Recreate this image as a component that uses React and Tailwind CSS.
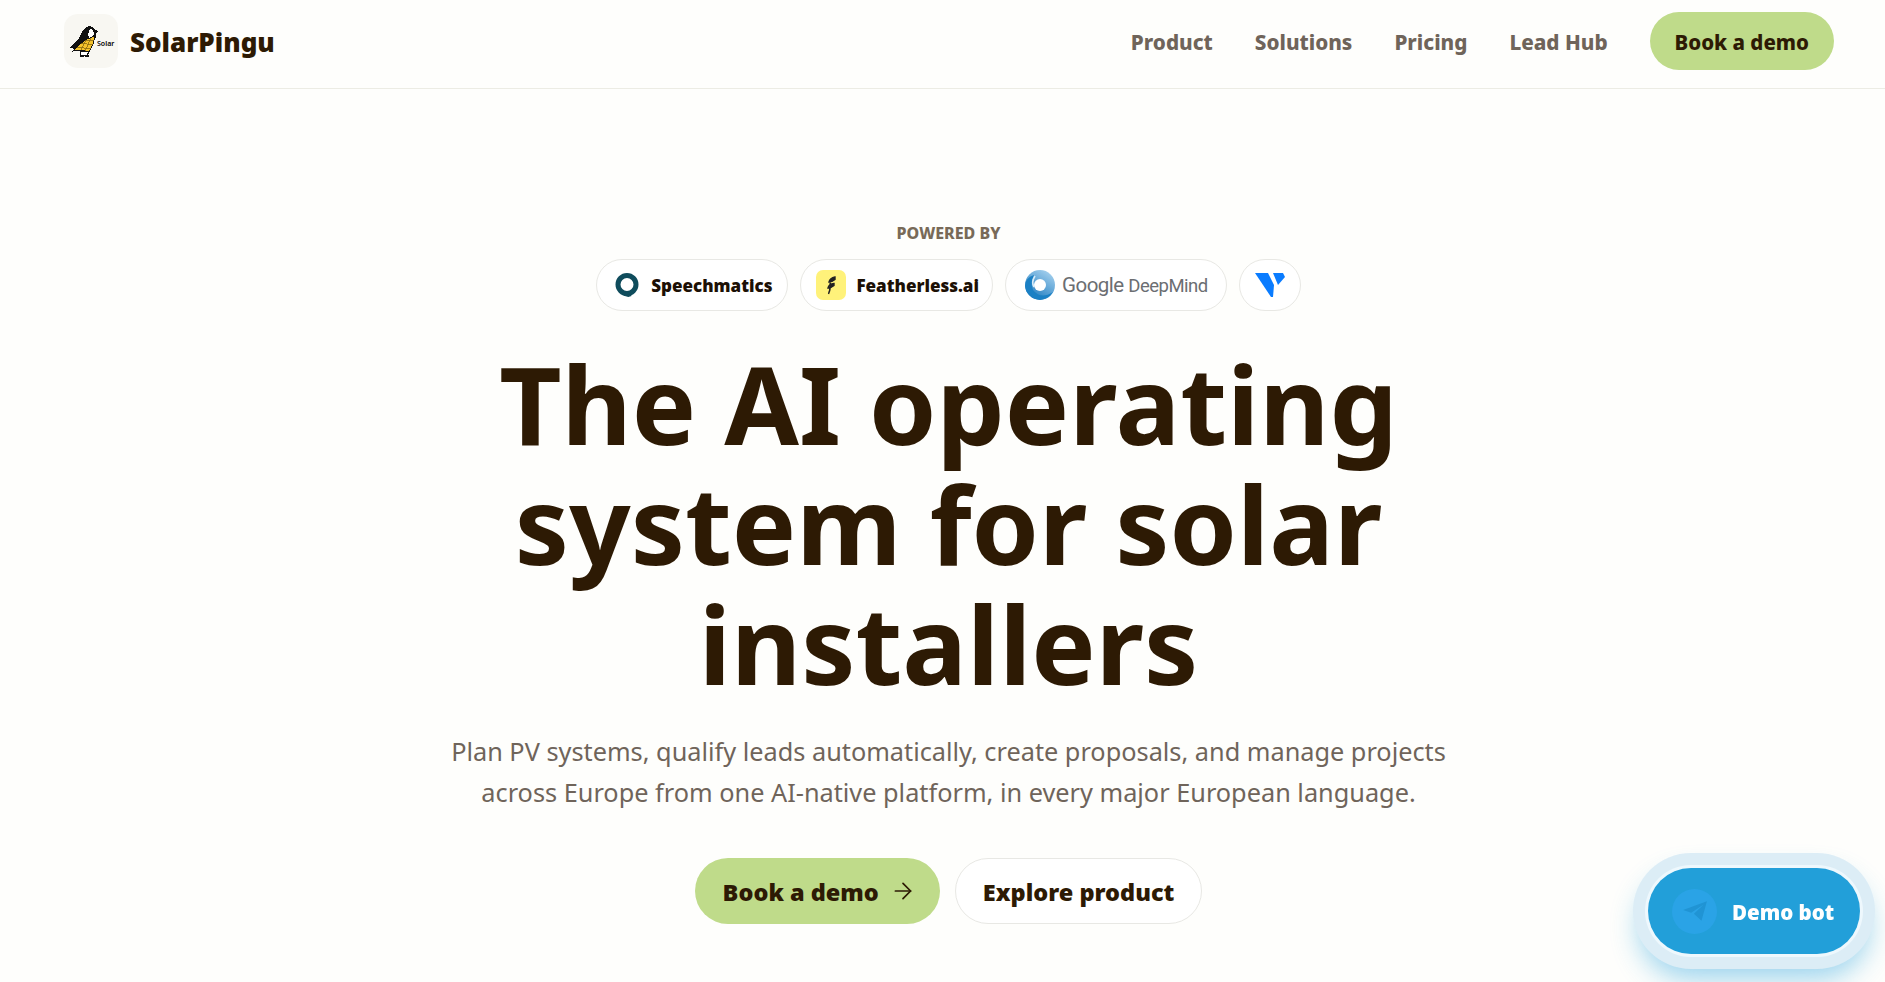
import { ArrowRight } from 'lucide-react'

const pills = 'flex items-center rounded-full border border-[#e8e8e4] bg-white h-[52px]'

function PinguLogo() {
  return (
    <div className="flex items-center justify-center w-[54px] h-[54px] rounded-[14px] bg-[#f8f7f2] relative overflow-hidden">
      <svg viewBox="0 0 54 54" className="w-[54px] h-[54px]" shapeRendering="crispEdges">
        {/* back and head */}
        <path d="M6 34 L10 29 L15 24 L18 18 L21 14 L25 12 L29 13 L31 16 L35 17 L32 19 L32 24 L22 27 L12 35 Z" fill="#111" />
        <path d="M26 15 L29 16 L30 19 L29 23 L25 24 L24 20 Z" fill="#fff" />
        {/* solar panel on the belly */}
        <path d="M9 37 L16 30 L23 25 L31 22 L29 30 L25 38 L16 36 Z" fill="#f4c22c" stroke="#111" strokeWidth="1" />
        <path d="M13 33 L27 35 M17 29 L29 31 M21 26 L30 26 M17 36 L22 26 M21 37 L27 24" stroke="#8a6a10" strokeWidth="0.8" fill="none" />
        {/* feet */}
        <path d="M16 37 L25 38 L23 41 L17 41 Z" fill="#fff" stroke="#111" strokeWidth="1" />
        <path d="M16 41 H20 V43 H16 Z M21 41 H25 V43 H21 Z" fill="#111" />
      </svg>
      <span className="absolute left-[33px] top-[25px] text-[7px] font-semibold leading-[10px] text-black">Solar</span>
    </div>
  )
}

function SpeechmaticsIcon() {
  return (
    <svg viewBox="0 0 26 26" className="w-[26px] h-[26px]">
      <circle cx="13" cy="12.5" r="9" fill="none" stroke="#0f4c5c" strokeWidth="5" />
      <path d="M9 21 Q13 25 17 23" fill="none" stroke="#0f4c5c" strokeWidth="2.5" />
    </svg>
  )
}

function FeatherlessIcon() {
  return (
    <div className="flex items-center justify-center w-[30px] h-[30px] rounded-[7px] bg-[#fff27a]">
      <svg viewBox="0 0 30 30" className="w-[30px] h-[30px]">
        <path d="M19 7 Q14 8 13 12 Q16 12 19 9.5 Z M18 13.5 Q13 14 12 18 Q15 18 18 15.5 Z M14 11 Q15.5 17 12.5 24" fill="#222" stroke="#222" strokeWidth="1.4" />
      </svg>
    </div>
  )
}

function DeepMindIcon() {
  return (
    <svg viewBox="0 0 30 30" className="w-[30px] h-[30px]">
      <defs>
        <linearGradient id="dm" x1="0.8" y1="0" x2="0.2" y2="1">
          <stop offset="0" stopColor="#a8d2ef" />
          <stop offset="1" stopColor="#1476bd" />
        </linearGradient>
      </defs>
      <circle cx="15" cy="15" r="15" fill="url(#dm)" />
      <path d="M0 16 A15 15 0 0 0 28 22 Q16 30 8 20 Q5 14 9 5 Q0 8 0 16 Z" fill="#1b80c4" />
      <circle cx="15" cy="15" r="6" fill="#fff" />
      <path d="M10 6 Q6 12 9 17" stroke="#d8ecf9" strokeWidth="1.6" fill="none" />
    </svg>
  )
}

function VultrIcon() {
  return (
    <svg viewBox="0 0 30 26" className="w-[30px] h-[26px]">
      <path d="M0 1 H13 L19 13 L18 25 H16 Z" fill="#0a7cff" />
      <path d="M18 1 H28 L30 5 L23 13 Z" fill="#0a7cff" />
    </svg>
  )
}

function TelegramIcon() {
  return (
    <div className="flex items-center justify-center w-[45px] h-[45px] rounded-full bg-[#2aa3e6]">
      <svg viewBox="0 0 24 24" className="w-[26px] h-[26px]" fill="#2094d4">
        <path d="M23 3 L1 11 L8.5 13.5 L20 6 L11 14.5 L18 21 Z" />
      </svg>
    </div>
  )
}

export default function App() {
  return (
    <div className="h-[982px] overflow-hidden bg-[#fefefc] relative" style={{ fontFamily: '"Noto Sans", "Open Sans", sans-serif' }}>
      <div className="w-[1897px]">
        {/* Nav */}
        <header className="flex items-center justify-between h-[89px] pl-16 pr-[63px] pb-[6px] border-b border-[#ecece4]">
          <div className="flex items-center gap-3">
            <PinguLogo />
            <span className="pt-[2px] text-[26px] font-black text-[#2d1a04]">SolarPingu</span>
          </div>
          <nav className="flex items-center gap-[42px] text-[20.7px] font-extrabold text-[#6f645a]">
            <a className="pt-[4px]">Product</a>
            <a className="pt-[4px]">Solutions</a>
            <a className="pt-[4px]">Pricing</a>
            <a className="pt-[4px]">Lead Hub</a>
            <a className="flex items-center h-[58px] pt-[2px] px-[25px] rounded-full bg-[#bfdb8a] text-[20.5px] text-[#2d1a04]">Book a demo</a>
          </nav>
        </header>

        {/* Hero */}
        <main className="flex flex-col items-center pt-[132px]">
          <p className="text-base font-extrabold text-[#786a58] leading-[24px]">POWERED BY</p>
          <div className="flex items-center gap-3 mt-[14px]">
            <div className={`${pills} gap-[11px] pl-[17px] pr-[15px]`}>
              <SpeechmaticsIcon />
              <span className="pt-[1px] text-[17px] font-black text-[#1c1005]">Speechmatics</span>
            </div>
            <div className={`${pills} gap-[10px] pl-[15px] pr-[13px]`}>
              <FeatherlessIcon />
              <span className="pt-[1px] text-[17px] font-black text-[#1c1005]">Featherless.ai</span>
            </div>
            <div className={`${pills} gap-[7px] pl-[19px] pr-[18px]`}>
              <DeepMindIcon />
              <span className="text-[20.5px] text-[#6b6e72] tracking-[-0.5px]" style={{ fontFamily: 'Roboto, sans-serif' }}>Google <span className="text-[18.5px]">DeepMind</span></span>
            </div>
            <div className={`${pills} justify-center w-[62px]`}>
              <VultrIcon />
            </div>
          </div>
          <h1 className="mt-[33px] w-[1000px] text-center text-[108px] leading-[120px] font-bold text-[#2d1a04]">
            The AI operating system for solar installers
          </h1>
          <p className="mt-[27px] w-[1040px] text-center text-[25.3px] leading-[41px] text-[#6f645a]">
            Plan PV systems, qualify leads automatically, create proposals, and manage projects across Europe from one AI-native platform, in every major European language.
          </p>
          <div className="flex items-center gap-[15px] mt-[45px]">
            <a className="flex items-center gap-[11px] h-[66px] pl-7 pr-6 pt-[3px] rounded-full bg-[#bfdb8a] text-[23.5px] font-black text-[#2d1a04]">
              Book a demo
              <ArrowRight className="w-[26px] h-[26px] -mt-[3px]" strokeWidth={1.6} />
            </a>
            <a className="flex items-center h-[66px] px-[27px] pt-[3px] rounded-full border border-[#e8e8e4] bg-white text-[23.5px] font-black text-[#2d1a04]">
              Explore product
            </a>
          </div>
        </main>
      </div>

      {/* Floating bot button */}
      <div className="fixed right-[10px] bottom-[13px] rounded-full bg-[#dcedf6] p-[15px] shadow-[0_16px_28px_-6px_rgba(34,160,220,0.45)]">
        <div className="flex items-center gap-[15px] w-[212px] h-[86px] pl-6 rounded-full bg-[#229fd9] ring-[3px] ring-[#eef8fd]">
          <TelegramIcon />
          <span className="pt-[3px] text-[20.5px] font-black text-white">Demo bot</span>
        </div>
      </div>
    </div>
  )
}
